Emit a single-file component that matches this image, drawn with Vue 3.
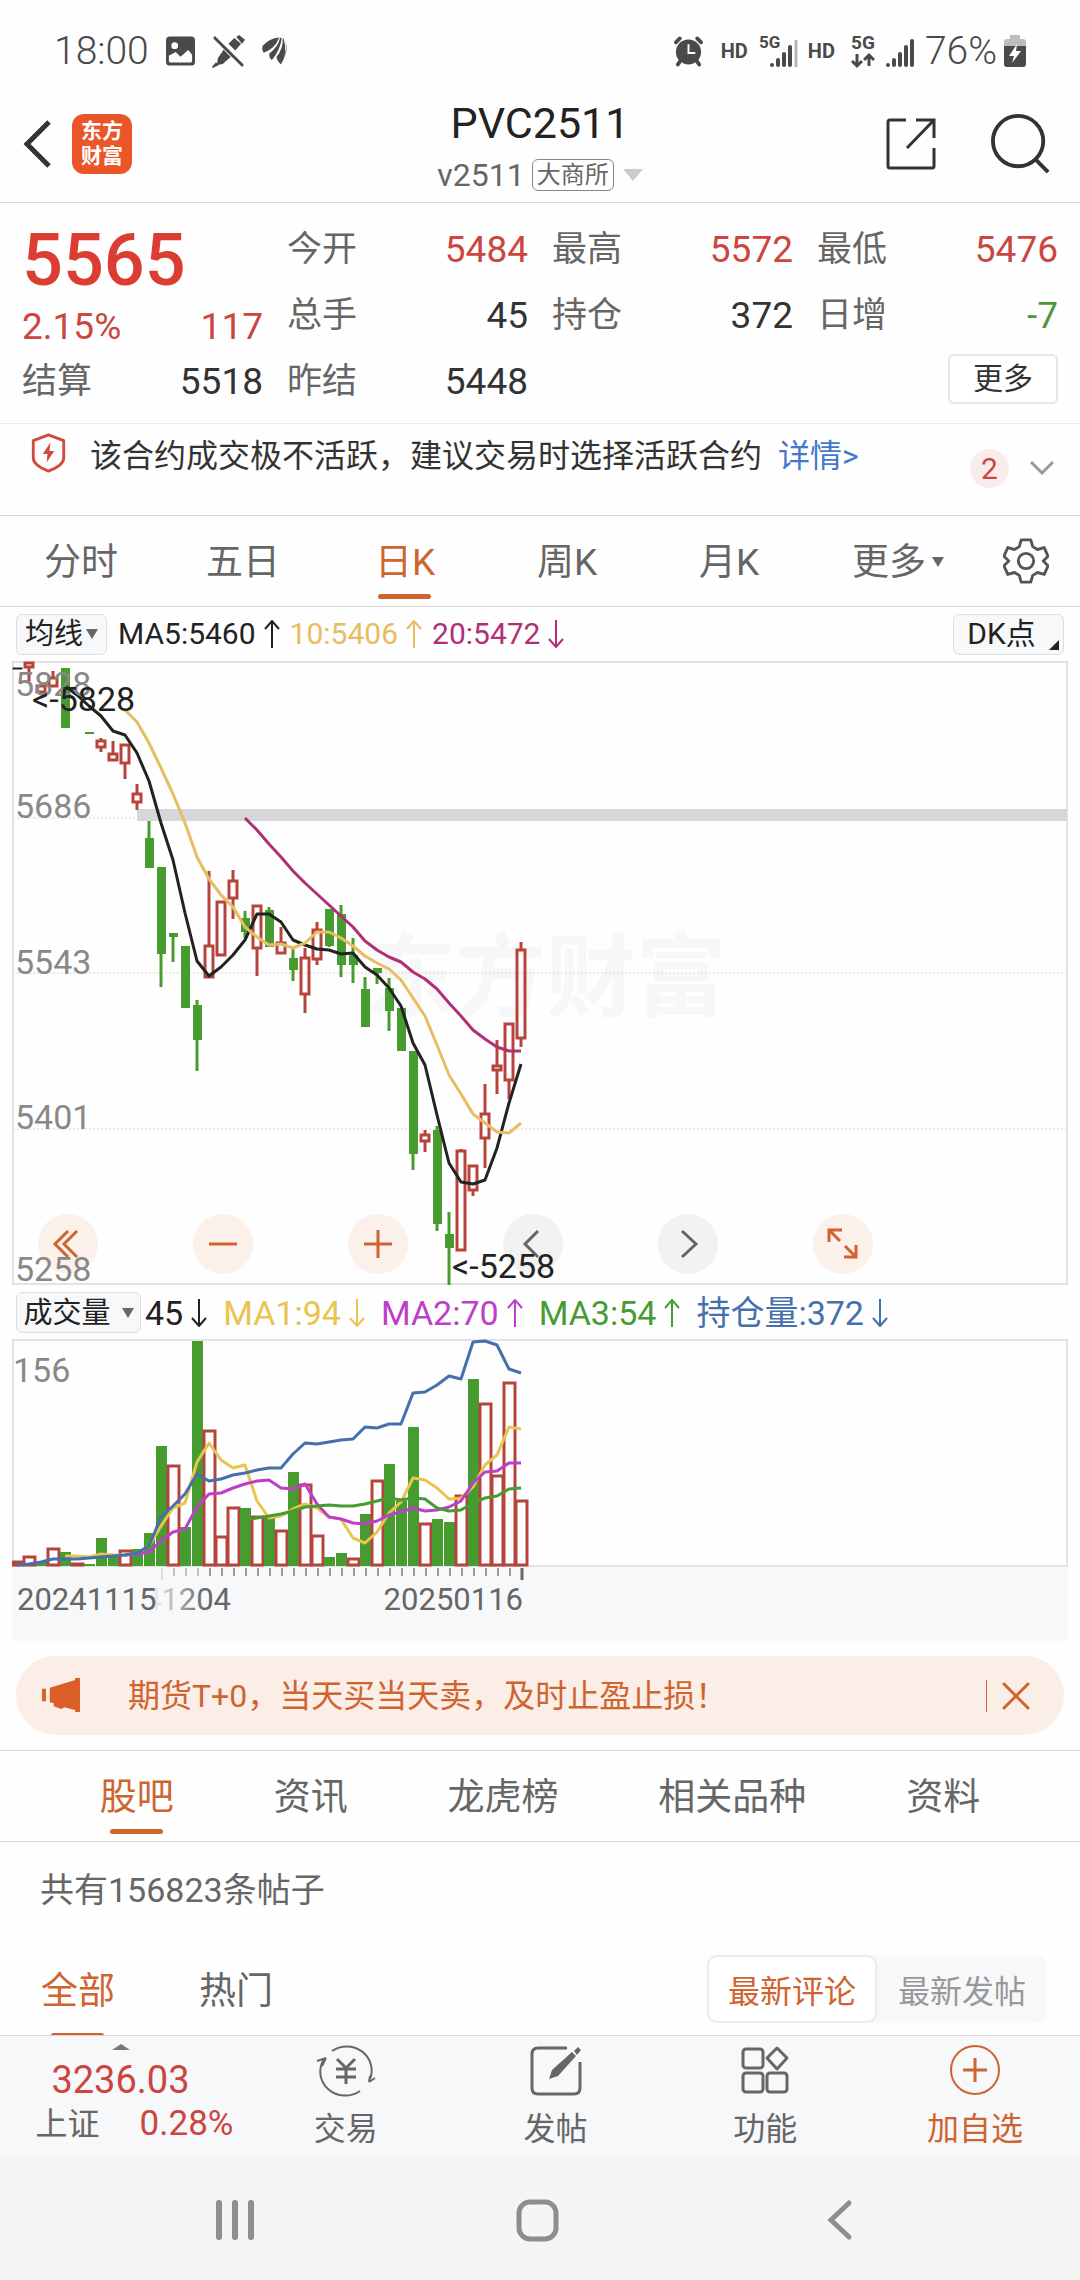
<script setup>
import { ref } from 'vue'

const columns = [
  [
    { label: '今开', value: '5484', tone: 'up' },
    { label: '总手', value: '45' },
    { label: '昨结', value: '5448' },
  ],
  [
    { label: '最高', value: '5572', tone: 'up' },
    { label: '持仓', value: '372' },
  ],
  [
    { label: '最低', value: '5476', tone: 'up' },
    { label: '日增', value: '-7', tone: 'down' },
  ],
]

const periods = ['分时', '五日', '日K', '周K', '月K']
const period = ref('日K')
const sections = ['股吧', '资讯', '龙虎榜', '相关品种', '资料']
const section = ref('股吧')
const filters = ['全部', '热门']
const filter = ref('全部')
const orders = ['最新评论', '最新发帖']
const order = ref('最新评论')

const arrowUp = 'M8 28V1M1 9l7-8 7 8'
const arrowDown = 'M8 0v27M1 19l7 8 7-8'

const priceLegend = [
  { text: 'MA5:5460', color: '#222', up: true },
  { text: '10:5406', color: '#e8bd62', up: true },
  { text: '20:5472', color: '#b03078', up: false },
]
const volumeLegend = [
  { text: '45', color: '#222', up: false },
  { text: 'MA1:94', color: '#e9c44e', up: false },
  { text: 'MA2:70', color: '#bd3fc9', up: true },
  { text: 'MA3:54', color: '#469b33', up: true },
  { text: '持仓量:372', color: '#4470ad', up: false },
]

// [direction, body top, body bottom, wick top, wick bottom]
const candles = [
  ['k', 668, 669, 668, 669], ['r', 663, 667, 663, 681], ['r', 686, 692, 686, 692],
  ['r', 678, 686, 671, 686], ['g', 668, 728, 668, 728], ['r', 699, 699, 699, 699],
  ['g', 732, 734, 732, 734], ['r', 741, 747, 738, 752], ['r', 754, 760, 741, 760],
  ['r', 745, 763, 745, 779], ['r', 794, 802, 784, 810], ['g', 838, 868, 821, 868],
  ['g', 867, 954, 867, 987], ['g', 933, 937, 933, 962], ['g', 946, 1008, 946, 1008],
  ['g', 1005, 1040, 1000, 1071], ['r', 946, 977, 871, 977], ['r', 902, 955, 902, 955],
  ['r', 881, 898, 870, 919], ['g', 918, 932, 911, 938], ['r', 906, 948, 906, 976],
  ['g', 910, 947, 907, 947], ['r', 943, 953, 927, 953], ['g', 958, 970, 948, 981],
  ['r', 958, 994, 948, 1013], ['r', 930, 959, 922, 965], ['g', 909, 946, 909, 947],
  ['g', 914, 965, 905, 977], ['g', 955, 965, 938, 983], ['g', 989, 1027, 977, 1027],
  ['g', 968, 973, 968, 984], ['g', 988, 1011, 978, 1031], ['g', 1008, 1051, 1008, 1051],
  ['g', 1051, 1154, 1051, 1170], ['r', 1135, 1141, 1130, 1152], ['g', 1130, 1224, 1126, 1231],
  ['g', 1234, 1248, 1212, 1285], ['r', 1151, 1250, 1149, 1250], ['r', 1166, 1190, 1166, 1196],
  ['r', 1114, 1138, 1084, 1168], ['r', 1066, 1070, 1040, 1094], ['r', 1024, 1080, 1024, 1099],
  ['r', 950, 1038, 942, 1047],
].map(([kind, top, bottom, high, low], i) => ({ kind, top, bottom, high, low, x: 17 + i * 12 }))

const volumes = [
  1562, 1557, 1562, 1549, 1552, 1564, 1564, 1538, 1557, 1551, 1549, 1533, 1446, 1466, 1527,
  1341, 1431, 1537, 1508, 1508, 1517, 1517, 1531, 1472, 1485, 1536, 1557, 1553, 1559, 1514,
  1481, 1464, 1501, 1427, 1524, 1519, 1522, 1496, 1379, 1404, 1476, 1383, 1501,
]
const volumeKinds = 'rrgrgrgggrgggrggrrrgrgrgrrggrgrgggrggrgrrrr'
const bars = volumes.map((top, i) => ({ top, kind: volumeKinds[i], x: 17 + i * 12 }))

const line = (start, values) => values.map((y, i) => `${17 + (start + i) * 12},${y}`).join(' ')

const ma5 = line(4, [
  686, 695, 706, 716, 731, 735, 753, 781, 823, 860, 913, 961, 976, 967, 955, 940, 914, 914, 922,
  940, 945, 949, 950, 954, 953, 967, 975, 988, 1006, 1043, 1065, 1115, 1163, 1182, 1184, 1180,
  1148, 1103, 1064,
])
const ma10 = line(9, [
  710, 722, 743, 768, 794, 823, 857, 879, 895, 907, 927, 937, 945, 944, 948, 943, 932, 932, 938,
  946, 956, 963, 969, 980, 998, 1016, 1045, 1075, 1094, 1114, 1123, 1132, 1133, 1123,
])
const ma20 = line(19, [
  818, 830, 844, 857, 871, 883, 894, 905, 916, 927, 941, 950, 957, 962, 972, 979, 989, 1003,
  1016, 1030, 1039, 1047, 1051, 1051,
])
const openInterest = line(0, [
  1565, 1564, 1562, 1559, 1559, 1559, 1558, 1557, 1556, 1555, 1553, 1546, 1517, 1506, 1494, 1474,
  1481, 1479, 1475, 1473, 1470, 1468, 1468, 1454, 1443, 1444, 1442, 1440, 1439, 1427, 1428, 1424,
  1424, 1393, 1392, 1385, 1376, 1379, 1342, 1341, 1345, 1369, 1373,
])
const vol1 = line(4, [
  1556, 1556, 1557, 1554, 1555, 1555, 1553, 1546, 1526, 1508, 1503, 1462, 1443, 1460, 1468, 1465,
  1501, 1518, 1516, 1509, 1504, 1508, 1517, 1519, 1538, 1543, 1532, 1513, 1502, 1478, 1480, 1488,
  1499, 1498, 1487, 1465, 1455, 1427, 1429,
])
const vol2 = line(9, [
  1555, 1554, 1552, 1541, 1532, 1529, 1507, 1494, 1493, 1488, 1484, 1481, 1480, 1488, 1489, 1484,
  1504, 1517, 1519, 1523, 1524, 1521, 1515, 1512, 1508, 1511, 1510, 1507, 1501, 1483, 1472, 1471,
  1463, 1463,
])
const vol3 = line(19, [
  1520, 1518, 1516, 1514, 1511, 1507, 1506, 1505, 1506, 1506, 1504, 1501, 1498, 1500, 1498, 1499,
  1508, 1511, 1510, 1503, 1498, 1496, 1489, 1488,
])

const gridLines = [818, 973, 1129]
const priceLabels = [
  { y: 696, text: '5828' },
  { y: 818, text: '5686' },
  { y: 974, text: '5543' },
  { y: 1129, text: '5401' },
  { y: 1281, text: '5258' },
]
const ticks = Array.from({ length: 29 }, (_, i) => ({
  x: 174 + i * 12,
  color: i < 3 ? '#c4c4c4' : '#999',
}))

const chartTools = [
  { name: '更早', d: 'M30 17 17 30l13 13M39 17 26 30l13 13' },
  { name: '缩小', d: 'M16 30h28' },
  { name: '放大', d: 'M16 30h28M30 16v28' },
  { name: '左移', d: 'M35 17 22 30l13 13', muted: true },
  { name: '右移', d: 'M24 17l14 13-14 13', muted: true },
  { name: '全屏', d: 'M27 27 16 16M16 28V16h13M32 32l11 11M31 43h12V31' },
]
</script>

<template>
  <div class="screen">
    <div class="status">
      <div class="status-side">
        <span class="clock">18:00</span>
        <svg class="s-icon" viewBox="0 0 30 30">
          <path fill="#4a4a4a" fill-rule="evenodd" d="M4 0h22a4 4 0 0 1 4 4v22a4 4 0 0 1-4 4H4a4 4 0 0 1-4-4V4a4 4 0 0 1 4-4zM9 6a3 3 0 1 0 0 7 3 3 0 0 0 0-7zM3 20v5q0 2 2 2h20q2 0 2-2v-6l-4-5-8 7-5-5z" />
        </svg>
        <svg class="s-icon pen" viewBox="0 0 34 34">
          <path fill="#4a4a4a" d="M25 2l3-2 6 5-3 4zM17 9l6-6 7 6-6 7zM14 12l8 8-11 10-6 1 1-7zM4 28l3 3-6 3-1-1z" />
          <path stroke="#fff" stroke-width="6" d="M4 3l28 28" />
          <path stroke="#4a4a4a" stroke-width="3" stroke-linecap="round" d="M3 3l28 28" />
        </svg>
        <svg class="s-icon leaf" viewBox="0 0 30 30">
          <path fill="#4a4a4a" d="M1 9Q8 1 19 0 15 12 2 17-1 13 1 9zM20 0q-1 9-12 18 0 5 3 7Q20 14 22 1zM23 1q1 10-7 21 1 5 5 8 8-12 3-29zM25 2q4 10-1 22 6-10 1-22z" />
        </svg>
      </div>
      <div class="status-side right">
        <svg class="s-icon alarm" viewBox="0 0 30 30">
          <circle cx="15" cy="16" r="13" fill="#4a4a4a" />
          <path fill="none" stroke="#4a4a4a" stroke-width="4" stroke-linecap="round" d="M2 6l4-4M28 6l-4-4M6 26l-2 3M24 26l2 3" />
          <path fill="none" stroke="#fff" stroke-width="2" d="M15 8v9h7" />
        </svg>
        <span class="hd">HD</span>
        <svg class="signal-a" viewBox="0 0 38 34">
          <text x="0" y="14" font-size="17" font-weight="700" fill="#4a4a4a">5G</text>
          <path stroke="#4a4a4a" stroke-width="4" stroke-linecap="round" d="M13 31v0M19 26v5M25 20v11M31 13v18" />
          <path stroke="#b5b5b5" stroke-width="3" d="M37 6v27" />
        </svg>
        <span class="hd">HD</span>
        <svg class="net" viewBox="0 0 24 34">
          <text x="0" y="15" font-size="19" font-weight="700" fill="#4a4a4a">5G</text>
          <path fill="none" stroke="#4a4a4a" stroke-width="3" d="M6 20v12M1 27l5 5 5-5M18 32V21M13 26l5-5 5 5" />
        </svg>
        <svg class="signal-b" viewBox="0 0 28 34">
          <path stroke="#4a4a4a" stroke-width="4" stroke-linecap="round" d="M2 31v0M8 26v5M14 20v11M20 13v18M26 7v24" />
        </svg>
        <span class="clock percent">76%</span>
        <svg class="battery" viewBox="0 0 22 34">
          <path fill="#bdbdbd" d="M6 1h10v4h3q3 0 3 3v7H0V8q0-3 3-3h3z" />
          <path fill="#4a4a4a" d="M0 12h22v18q0 3-3 3H3q-3 0-3-3z" />
          <path fill="#fff" d="M13 10 5 22h5l-2 7 9-12h-5z" />
        </svg>
      </div>
    </div>

    <header class="header">
      <div class="header-left">
        <button class="plain" aria-label="返回">
          <svg class="back" viewBox="0 0 28 48">
            <path fill="none" stroke="#333" stroke-width="5" d="M26 2 4 24l22 22" />
          </svg>
        </button>
        <div class="logo"><span>东方</span><span>财富</span></div>
      </div>
      <div class="title">
        <h1>PVC2511</h1>
        <button class="plain subtitle">
          <span>v2511</span><span class="exchange">大商所</span><i class="caret"></i>
        </button>
      </div>
      <div class="header-right">
        <button class="plain" aria-label="分享">
          <svg class="share" viewBox="0 0 50 52">
            <path fill="none" stroke="#333" stroke-width="3" d="M20 2H4Q2 2 2 4v44q0 2 2 2h42q2 0 2-2V30M30 2h18v18M48 2 21 30" />
          </svg>
        </button>
        <button class="plain" aria-label="搜索">
          <svg class="search" viewBox="0 0 62 62">
            <circle cx="28" cy="28" r="26" fill="none" stroke="#333" stroke-width="4" />
            <path stroke="#333" stroke-width="4" d="M46 47l13 13" />
          </svg>
        </button>
      </div>
    </header>

    <section class="quote">
      <div class="col">
        <div class="price">5565</div>
        <div class="change"><span>2.15%</span><span>117</span></div>
        <div class="cell"><span class="label">结算</span><span class="value">5518</span></div>
      </div>
      <div v-for="(col, i) in columns" :key="i" class="col">
        <div v-for="cell in col" :key="cell.label" class="cell">
          <span class="label">{{ cell.label }}</span>
          <span class="value" :class="cell.tone">{{ cell.value }}</span>
        </div>
        <div v-if="i === 2" class="cell end"><button class="more">更多</button></div>
      </div>
    </section>

    <section class="warning">
      <svg class="shield" viewBox="0 0 36 42">
        <path fill="none" stroke="#d04a40" stroke-width="3" stroke-linejoin="round" d="M18 2l16 6v18q0 8-16 14Q2 34 2 26V8z" />
        <path fill="#d04a40" d="M20 10l-8 12h5l-1 9 8-12h-5z" />
      </svg>
      <p>该合约成交极不活跃，建议交易时选择活跃合约</p>
      <a href="#detail">详情&gt;</a>
      <div class="warning-end">
        <span class="badge">2</span>
        <svg class="chevron" viewBox="0 0 24 16">
          <path fill="none" stroke="#999" stroke-width="3" d="M1 2l11 11L23 2" />
        </svg>
      </div>
    </section>

    <nav class="periods">
      <button v-for="p in periods" :key="p" class="plain tab" :class="{ active: p === period }" @click="period = p">{{ p }}</button>
      <button class="plain tab menu">更多<i class="caret dark"></i></button>
      <button class="plain gear" aria-label="设置">
        <svg viewBox="0 0 48 50">
          <path fill="none" stroke="#555" stroke-width="3" stroke-linejoin="round" d="M19 3h10l2 7 5 3 7-2 4 9-5 5 5 5-4 9-7-2-5 3-2 7H19l-2-7-5-3-7 2-4-9 5-5-5-5 4-9 7 2 5-3z" />
          <circle cx="24" cy="25" r="8" fill="none" stroke="#555" stroke-width="3" />
        </svg>
      </button>
    </nav>

    <div class="legend price-legend">
      <button class="pick">均线<i class="caret dark"></i></button>
      <span v-for="l in priceLegend" :key="l.text" class="legend-item" :style="{ color: l.color }">
        {{ l.text }}<svg class="arrow" viewBox="0 0 16 28"><path :d="l.up ? arrowUp : arrowDown" /></svg>
      </span>
      <button class="pick dk">DK点<i class="corner"></i></button>
    </div>

    <div class="chart">
      <div class="tools">
        <button v-for="t in chartTools" :key="t.name" class="plain tool" :class="{ muted: t.muted }" :aria-label="t.name">
          <svg viewBox="0 0 60 60"><path :d="t.d" /></svg>
        </button>
      </div>
      <svg class="plot" viewBox="12 661 1056 625">
        <text x="366" y="1009" class="watermark">东方财富</text>
        <path v-for="y in gridLines" :key="y" :d="`M13 ${y}H1066`" stroke="#d4d4d4" stroke-dasharray="2 2" />
        <rect x="13" y="662" width="1054" height="622" fill="none" stroke="#e3e3e3" stroke-width="2" />
        <rect x="137" y="809" width="930" height="12" fill="#d6d7db" />
        <g v-for="c in candles" :key="c.x" :class="c.kind">
          <path :d="`M${c.x} ${c.high}V${c.top}M${c.x} ${c.bottom}V${c.low}`" />
          <rect v-if="c.kind === 'r'" :x="c.x - 4" :y="c.top" width="8" :height="c.bottom - c.top" />
          <rect v-else :x="c.x - 4" :y="c.top" width="9" :height="c.bottom - c.top" />
        </g>
        <polyline :points="ma5" class="line" stroke="#222" />
        <polyline :points="ma10" class="line" stroke="#e8bd62" />
        <polyline :points="ma20" class="line" stroke="#b03078" />
        <text v-for="l in priceLabels" :key="l.text" x="15" :y="l.y" class="axis">{{ l.text }}</text>
        <text x="32" y="711" class="mark">&lt;-5828</text>
        <text x="452" y="1278" class="mark">&lt;-5258</text>
      </svg>
    </div>

    <div class="legend volume-legend">
      <button class="pick wide">成交量<i class="caret dark"></i></button>
      <span v-for="l in volumeLegend" :key="l.text" class="legend-item" :style="{ color: l.color }">
        {{ l.text }}<svg class="arrow" viewBox="0 0 16 28"><path :d="l.up ? arrowUp : arrowDown" /></svg>
      </span>
    </div>

    <div class="chart">
      <svg class="plot" viewBox="12 1339 1056 302">
        <defs>
          <linearGradient id="date-fade" gradientUnits="userSpaceOnUse" x1="150" y1="0" x2="204" y2="0">
            <stop offset="0" stop-color="#666" stop-opacity="0" />
            <stop offset="1" stop-color="#666" />
          </linearGradient>
        </defs>
        <rect x="12" y="1567" width="1056" height="74" fill="#f7f8fa" />
        <rect x="13" y="1340" width="1054" height="226" fill="none" stroke="#e3e3e3" stroke-width="2" />
        <g v-for="b in bars" :key="b.x" :class="b.kind">
          <rect v-if="b.kind === 'r'" class="hollow" :x="b.x - 5" :y="b.top" width="11" :height="1565 - b.top" />
          <rect v-else :x="b.x - 5" :y="b.top" width="11" :height="1566 - b.top" />
        </g>
        <polyline :points="vol1" class="line" stroke="#e9c44e" />
        <polyline :points="vol2" class="line" stroke="#bd3fc9" />
        <polyline :points="vol3" class="line" stroke="#469b33" />
        <polyline :points="openInterest" class="line" stroke="#4470ad" />
        <text x="13" y="1382" class="axis">156</text>
        <path d="M162 1568v12" stroke="#dcdcdc" stroke-width="2" />
        <path v-for="t in ticks" :key="t.x" :d="`M${t.x} 1568v8`" :stroke="t.color" stroke-width="2" />
        <path d="M522 1568v12" stroke="#666" stroke-width="3" />
        <text x="17" y="1610" class="date" fill="#666">20241115</text>
        <text x="231" y="1610" class="date" text-anchor="end" fill="url(#date-fade)">20241204</text>
        <text x="523" y="1610" class="date" text-anchor="end" fill="#666">20250116</text>
      </svg>
    </div>

    <aside class="promo">
      <svg class="horn" viewBox="0 0 40 36">
        <path fill="#da5e26" d="M0 11h4v13H0zM8 10 34 2V0h5v35h-5v-2l-11-3-3 2-8-3v-3l-4-1z" />
      </svg>
      <p>期货T+0，当天买当天卖，及时止盈止损！</p>
      <i class="bar"></i>
      <button class="plain" aria-label="关闭">
        <svg class="close" viewBox="0 0 28 28">
          <path stroke="#cf6430" stroke-width="3" stroke-linecap="round" d="M2 2l24 24M26 2 2 26" />
        </svg>
      </button>
    </aside>

    <nav class="sections">
      <button v-for="s in sections" :key="s" class="plain tab" :class="{ active: s === section }" @click="section = s">{{ s }}</button>
    </nav>

    <p class="count">共有156823条帖子</p>

    <div class="filters">
      <button v-for="f in filters" :key="f" class="plain filter" :class="{ active: f === filter }" @click="filter = f">{{ f }}</button>
      <div class="segment">
        <button v-for="o in orders" :key="o" :class="{ active: o === order }" @click="order = o">{{ o }}</button>
      </div>
    </div>

    <footer class="dock">
      <button class="plain index">
        <i class="rise"></i>
        <span class="index-value">3236.03</span>
        <span class="index-row"><span>上证</span><span class="index-pct">0.28%</span></span>
      </button>
      <button class="plain action">
        <svg viewBox="0 0 60 54">
          <g fill="none" stroke="#666" stroke-width="2">
            <path d="M16 7a25 24 0 0 1 38 28M44 47A25 24 0 0 1 8 15" />
            <path d="M1 17l9-3M53 38l6-4M10 14l-4 8M53 38l1-6" />
            <path stroke-width="3" d="M21 15l9 9 9-9M30 24v16M20 25h20M20 33h20" />
          </g>
        </svg>
        <span>交易</span>
      </button>
      <button class="plain action">
        <svg viewBox="0 0 60 54">
          <path fill="none" stroke="#666" stroke-width="3" d="M41 4H12q-6 0-6 6v34q0 6 6 6h36q6 0 6-6V18" />
          <path fill="#666" d="M23 35l3-9 20-18 4 4-18 20zM48 7l4-4 3 3-4 5z" />
        </svg>
        <span>发帖</span>
      </button>
      <button class="plain action">
        <svg viewBox="0 0 60 54">
          <g fill="none" stroke="#666" stroke-width="3">
            <rect x="8" y="5" width="20" height="19" rx="3" />
            <rect x="8" y="29" width="20" height="19" rx="3" />
            <rect x="32" y="29" width="20" height="19" rx="3" />
            <path stroke-linejoin="round" d="M42 4l10 10-10 11-10-11z" />
          </g>
        </svg>
        <span>功能</span>
      </button>
      <button class="plain action accent">
        <svg viewBox="0 0 60 54">
          <circle cx="30" cy="26" r="24" fill="none" stroke="#cf6430" stroke-width="2" />
          <path stroke="#cf6430" stroke-width="3" d="M18 26h24M30 14v24" />
        </svg>
        <span>加自选</span>
      </button>
    </footer>

    <nav class="system">
      <button class="plain" aria-label="最近任务">
        <svg viewBox="0 0 44 44"><path stroke="#8e8e8e" stroke-width="6" stroke-linecap="round" d="M6 5v34M22 5v34M38 5v34" /></svg>
      </button>
      <button class="plain" aria-label="主页">
        <svg viewBox="0 0 44 44"><rect x="4" y="4" width="37" height="37" rx="11" fill="none" stroke="#8e8e8e" stroke-width="5" /></svg>
      </button>
      <button class="plain" aria-label="返回">
        <svg viewBox="0 0 44 44"><path fill="none" stroke="#8e8e8e" stroke-width="5" stroke-linecap="round" d="M32 5 14 22l18 17" /></svg>
      </button>
    </nav>
  </div>
</template>

<style>
body {
  margin: 0;
  background: #fefefe;
}
</style>

<style scoped>
.screen {
  font-family: Roboto, "Noto Sans CJK SC", sans-serif;
  color: #333;
  background: #fefefe;
  overflow: hidden;
}
svg { display: block; flex: none; }
p, h1 { margin: 0; font-weight: 400; }
button { font-family: inherit; cursor: pointer; }
.plain {
  padding: 0;
  border: 0;
  background: none;
  color: inherit;
  font-size: inherit;
}

/* status bar */
.status {
  display: flex;
  justify-content: space-between;
  height: 82px;
  padding: 10px 54px 0 54px;
  color: #4a4a4a;
}
.status-side { display: flex; align-items: center; gap: 17px; }
.status-side.right { gap: 11px; }
.status svg { overflow: visible; }
.clock { font-size: 39px; font-weight: 300; line-height: 48px; }
.percent { margin-right: -4px; }
.s-icon { width: 29px; height: 30px; }
.pen { width: 33px; height: 33px; }
.leaf { width: 27px; }
.alarm { margin-right: 7px; }
.hd { font-size: 20px; font-weight: 700; line-height: 24px; }
.signal-a { width: 38px; height: 34px; }
.net { width: 24px; height: 34px; margin-left: 5px; }
.signal-b { width: 28px; height: 34px; }
.battery { width: 22px; height: 34px; }

/* header */
.header {
  display: grid;
  grid-template-columns: 1fr auto 1fr;
  height: 110px;
  border-bottom: 1px solid #d6d6d6;
}
.header-left, .header-right { display: flex; align-items: center; padding-bottom: 6px; }
.header-left { gap: 21px; padding-left: 23px; }
.header-right { justify-content: flex-end; gap: 55px; padding-right: 29px; }
.back { width: 28px; height: 48px; }
.share { width: 50px; height: 52px; }
.search { width: 60px; height: 60px; }
.logo {
  display: flex;
  flex-direction: column;
  justify-content: center;
  align-items: center;
  width: 60px;
  height: 60px;
  border-radius: 12px;
  background: #ea5628;
  color: #fff;
  font-size: 21px;
  font-weight: 700;
  line-height: 25px;
}
.title { padding-top: 5px; text-align: center; }
.title h1 { color: #222; font-size: 43px; line-height: 52px; }
.subtitle {
  display: flex;
  align-items: center;
  margin: 0 auto;
  color: #666;
  font-size: 32px;
  line-height: 52px;
}
.exchange {
  margin-left: 7px;
  padding: 0 4px;
  border: 1px solid #888;
  border-radius: 6px;
  font-size: 24px;
  line-height: 30px;
}
.caret {
  display: inline-block;
  margin-left: 9px;
  border: 10px solid transparent;
  border-top: 12px solid #ccc;
  border-bottom: 0;
}
.caret.dark { border-width: 10px 6px 0; border-top-color: #666; }

/* quote */
.quote {
  display: grid;
  grid-template-columns: repeat(4, 1fr);
  gap: 24px;
  padding: 14px 22px 8px;
  border-bottom: 1px solid #ececec;
}
.cell, .change { display: flex; justify-content: space-between; align-items: center; }
.cell { height: 66px; }
.end { justify-content: flex-end; }
.label { color: #666; font-size: 35px; line-height: 44px; }
.value { font-size: 37px; line-height: 44px; }
.up { color: #cb463f; }
.down { color: #4a9a3a; }
.price { color: #dc3d33; font-size: 72px; font-weight: 500; line-height: 88px; }
.change { color: #cb463f; font-size: 37px; line-height: 44px; }
.more {
  width: 110px;
  height: 50px;
  margin-bottom: 6px;
  padding: 0;
  border: 2px solid #e6e6e6;
  border-radius: 6px;
  background: #fff;
  color: #333;
  font-size: 30px;
  line-height: 44px;
}

/* warning strip */
.warning {
  display: flex;
  height: 91px;
  padding: 0 26px 0 31px;
  font-size: 32px;
  line-height: 64px;
}
.shield { width: 35px; height: 40px; margin: 9px 24px 0 0; }
.warning a { margin-left: 16px; color: #4478cc; text-decoration: none; }
.warning-end { display: flex; align-items: center; gap: 21px; height: 88px; margin-left: auto; }
.badge {
  width: 39px;
  height: 39px;
  border-radius: 50%;
  background: #faeceb;
  color: #cb463f;
  font-size: 30px;
  line-height: 40px;
  text-align: center;
}
.chevron { width: 24px; height: 16px; }

/* tabs */
.periods {
  display: grid;
  grid-template-columns: repeat(6, 15%) 10%;
  height: 90px;
  border-top: 1px solid #d6d6d6;
  border-bottom: 1px solid #d6d6d6;
  color: #666;
}
.tab { position: relative; height: 90px; padding-top: 4px; font-size: 37px; line-height: 86px; }
.tab .caret { margin-left: 6px; vertical-align: 8px; }
.menu { padding-left: 14px; }
.active { color: #cf6430; }
.tab.active::after, .filter.active::after {
  content: "";
  position: absolute;
  left: 50%;
  bottom: 7px;
  width: 53px;
  height: 5px;
  margin-left: -27px;
  border-radius: 3px;
  background: #cf6430;
}
.gear { display: flex; justify-content: center; align-items: center; }
.gear svg { width: 46px; height: 48px; }

/* chart legends */
.legend { display: flex; align-items: center; padding: 0 16px; }
.price-legend { height: 54px; font-size: 30px; }
.volume-legend { height: 53px; font-size: 34px; }
.legend-item { display: flex; align-items: center; gap: 8px; line-height: 40px; }
.price-legend .legend-item { margin-right: 10px; }
.volume-legend .legend-item { margin-right: 16px; }
.arrow { width: 16px; height: 28px; fill: none; stroke: currentColor; stroke-width: 2; }
.pick {
  position: relative;
  width: 91px;
  height: 41px;
  margin-right: 11px;
  padding: 0;
  border: 1px solid #dcdee2;
  border-radius: 6px;
  background: #f7f8fa;
  color: #222;
  font-size: 29px;
  line-height: 38px;
}
.pick .caret { margin-left: 3px; vertical-align: 5px; }
.pick.wide { width: 125px; margin-right: 4px; }
.pick.wide .caret { margin-left: 11px; }
.pick.dk { width: 111px; margin: 0 0 0 auto; padding-right: 14px; font-size: 30px; }
.corner {
  position: absolute;
  right: 4px;
  bottom: 4px;
  border-left: 10px solid transparent;
  border-bottom: 10px solid #222;
}

/* charts */
.chart { position: relative; padding: 0 12px; }
.plot { position: relative; width: 100%; height: auto; pointer-events: none; }
.tools { position: absolute; left: 38px; bottom: 12px; display: flex; gap: 95px; }
.tool { width: 60px; height: 60px; border-radius: 50%; background: #fbf1ea; }
.tool path { fill: none; stroke: #cf6430; stroke-width: 3; }
.tool.muted { background: #f2f2f2; }
.tool.muted path { stroke: #666; }
.watermark { fill: #f7f7f7; font-size: 90px; font-weight: 700; }
.axis { fill: #888; font-size: 34px; }
.mark { fill: #222; font-size: 34px; }
.date { font-size: 31px; }
.line { fill: none; stroke-width: 3; stroke-linejoin: round; }
.r rect { fill: none; stroke: #b5443d; stroke-width: 3; }
.r .hollow { fill: #fff; }
.r path { stroke: #b5443d; stroke-width: 3; }
.g rect { fill: #479c30; }
.g path { stroke: #479c30; stroke-width: 3; }
.k rect { fill: #222; stroke: #222; }

/* promo */
.promo {
  display: flex;
  align-items: center;
  height: 79px;
  margin: 15px 16px;
  padding: 0 34px 0 26px;
  border-radius: 40px;
  background: #fbeee6;
  color: #cf6430;
  font-size: 32px;
  line-height: 48px;
}
.horn { width: 39px; height: 35px; margin-right: 47px; }
.bar { width: 1px; height: 32px; margin: 0 15px 0 auto; background: #cf6430; }
.close { width: 28px; height: 28px; }

.sections {
  display: flex;
  justify-content: space-evenly;
  height: 90px;
  border-top: 1px solid #d6d6d6;
  border-bottom: 1px solid #d6d6d6;
  color: #666;
}
.count { padding: 0 40px; color: #666; font-size: 34px; line-height: 96px; }
.filters {
  display: flex;
  align-items: flex-start;
  height: 97px;
  padding: 0 33px 0 41px;
  overflow: hidden;
  color: #666;
}
.filter { position: relative; height: 100px; margin-right: 84px; font-size: 37px; line-height: 108px; }
.filter.active { color: #cf6430; }
.filter.active::after { bottom: 0; }
.segment {
  display: flex;
  height: 68px;
  margin: 17px 0 0 auto;
  border-radius: 10px;
  background: #f7f8fa;
}
.segment button {
  width: 170px;
  padding: 0;
  border: 0;
  border-radius: 10px;
  background: none;
  color: #999;
  font-size: 32px;
}
.segment .active { border: 2px solid #ececec; background: #fff; color: #cf6430; }

/* dock */
.dock {
  display: flex;
  height: 118px;
  border-top: 1px solid #d6d6d6;
  background: #f7f8fa;
  color: #666;
}
.index { display: flex; flex-direction: column; align-items: center; width: 241px; padding-top: 8px; }
.rise { border: 9px solid transparent; border-top: 0; border-bottom: 6px solid #777; }
.index-value { margin-top: 7px; color: #cb463f; font-size: 38px; line-height: 46px; }
.index-row { display: flex; gap: 40px; padding-left: 28px; font-size: 32px; line-height: 42px; }
.index-pct { color: #cb463f; font-size: 35px; }
.action {
  display: flex;
  flex: 1;
  flex-direction: column;
  align-items: center;
  padding-top: 8px;
  font-size: 32px;
  line-height: 44px;
}
.action svg { width: 60px; height: 54px; margin-bottom: 9px; }
.accent { color: #cf6430; }

.system {
  display: grid;
  grid-template-columns: repeat(3, 1fr);
  height: 120px;
  padding: 6px 90px 0 84px;
  background: #f5f5f5;
}
.system button { display: flex; justify-content: center; align-items: center; }
.system svg { width: 44px; height: 44px; }
</style>
